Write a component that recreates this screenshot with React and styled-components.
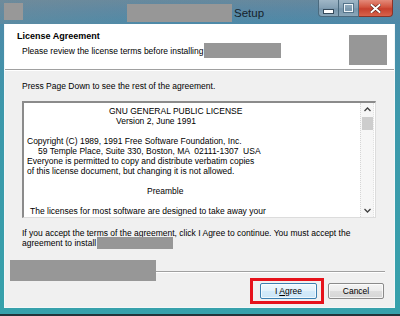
import React from 'react';
import styled, { createGlobalStyle } from 'styled-components';

const Global = createGlobalStyle`
  html, body { margin: 0; padding: 0; background: #1e2c32; }
  body { font-family: "Liberation Sans", Arial, sans-serif; }
  #root { width: 400px; height: 316px; }
`;

const Window = styled.div`
  width: 400px;
  height: 316px;
  display: flex;
  flex-direction: column;
  overflow: hidden;
  background: linear-gradient(180deg, #6a8a9d 0px, #5d89a3 10px, #4d8ba9 24px, #3c98ab 110px, #36a1ab 316px);
`;

const TitleBar = styled.div`
  height: 24px;
  flex-shrink: 0;
  display: flex;
  align-items: flex-start;
  background: linear-gradient(90deg, rgba(120,140,150,0.35) 0%, rgba(80,130,160,0.1) 40%, rgba(70,125,165,0.15) 100%);
`;

const AppIcon = styled.div`
  width: 19px;
  height: 17px;
  margin: 3px 0 0 4px;
  background: #989898;
`;

const TitleGroup = styled.div`
  display: flex;
  align-items: center;
  height: 18px;
  margin: 4px 0 0 104px;
`;

const Redacted = styled.div`
  width: ${p => p.$w}px;
  height: ${p => p.$h}px;
  background: #979797;
  flex-shrink: 0;
`;

const TitleText = styled.span`
  font-size: 11.5px;
  color: #15232c;
  margin-left: 2px;
  line-height: 18px;
`;

const Captions = styled.div`
  display: flex;
  margin: 0 7px 0 auto;
`;

const CapButton = styled.div`
  width: ${p => p.$w}px;
  height: 17px;
  box-sizing: border-box;
  display: flex;
  align-items: center;
  justify-content: center;
  border: 1px solid #4b6a7e;
  border-top: none;
  border-left-width: ${p => (p.$first ? 1 : 0)}px;
  border-radius: ${p => p.$radius};
  background: ${p =>
    p.$close
      ? 'linear-gradient(180deg, #e48a7a 0%, #d2543f 45%, #c7402d 55%, #d8634c 100%)'
      : 'linear-gradient(180deg, #9fb6c6 0%, #84a0b4 50%, #7795ab 55%, #8ba7ba 100%)'};
  border-color: ${p => (p.$close ? '#8a3428' : '#4b6a7e')};
`;

const MinGlyph = styled.div`
  width: 9px;
  height: 3px;
  margin-top: 6px;
  background: #fff;
  border: 1px solid #34495a;
`;

const RestoreGlyph = styled.div`
  width: 7px;
  height: 6px;
  border: 1px solid #eef4f8;
  box-shadow: 0 0 0 1px #55748a;
`;

const Client = styled.div`
  flex: 1;
  margin: 0 5px 0 4px;
  border: 1px solid #f2f7f8;
  border-top: none;
  background: #f0f0f0;
  display: flex;
  flex-direction: column;
  font-size: 8.5px;
  line-height: 10px;
  color: #000;
`;

const Header = styled.div`
  height: 45px;
  flex-shrink: 0;
  background: #fff;
  border-bottom: 1px solid #a0a0a0;
  display: flex;
`;

const HeaderText = styled.div`
  flex: 1;
  padding: 7px 0 0 12px;
`;

const HeaderTitle = styled.div`
  font-weight: bold;
  font-size: 9px;
  line-height: 10px;
`;

const HeaderSub = styled.div`
  display: flex;
  align-items: center;
  height: 15px;
  margin: 2px 0 0 5px;
  white-space: nowrap;
`;

const HeaderLogo = styled(Redacted)`
  margin: 11px 7px 0 0;
`;

const Body = styled.div`
  flex: 1;
  border-top: 1px solid #fff;
  padding-top: 10px;
  display: flex;
  flex-direction: column;
`;

const Intro = styled.div`
  margin-left: 17px;
  white-space: nowrap;
`;

const LicenseBox = styled.div`
  height: 117px;
  margin: 10px 18px 0 17px;
  box-sizing: border-box;
  border-top: 2px solid #8b8b8b;
  border-left: 2px solid #8b8b8b;
  border-right: 1px solid #dcdcdc;
  border-bottom: 1px solid #dcdcdc;
  background: #fff;
  display: flex;
`;

const LicenseText = styled.div`
  flex: 1;
  overflow: hidden;
  padding: 3px 0 0 3px;
`;

const Line = styled.div`
  height: 10px;
  white-space: pre;
  padding-left: ${p => p.$indent || 0}px;
`;

const ScrollBar = styled.div`
  width: 12px;
  margin-right: 1px;
  background: #f6f6f6;
  border-left: 1px dotted #d6d6d6;
  border-right: 1px dotted #e2e2e2;
  display: flex;
  flex-direction: column;
  align-items: center;
`;

const ScrollArrow = styled.div`
  height: 13px;
  width: 100%;
  display: flex;
  align-items: center;
  justify-content: center;
`;

const Thumb = styled.div`
  width: 11px;
  height: 13px;
  margin-top: 1px;
  background: #cdcdcd;
`;

const Spacer = styled.div`
  flex: 1;
`;

const AcceptText = styled.div`
  margin: 10px 0 0 17px;
  white-space: nowrap;
`;

const InlineRedacted = styled.span`
  display: inline-block;
  width: 76px;
  height: 12px;
  margin: -1px 0 -1px 1px;
  vertical-align: top;
  background: #979797;
`;

const BrandRow = styled.div`
  height: 21px;
  margin: 12px 9px 0 5px;
  display: flex;
  align-items: center;
`;

const Etch = styled.div`
  flex: 1;
  height: 0;
  margin-top: 2px;
  border-top: 1px solid #a0a0a0;
  border-bottom: 1px solid #fff;
`;

const ButtonRow = styled.div`
  display: flex;
  justify-content: flex-end;
  gap: 11px;
  margin: 2px 10px 0 0;
`;

const Button = styled.div`
  position: relative;
  width: ${p => p.$w}px;
  height: 16px;
  box-sizing: border-box;
  display: flex;
  align-items: center;
  justify-content: center;
  border-radius: 2px;
  border: 1px solid ${p => (p.$default ? '#3c7fb1' : '#8a8a8a')};
  background: ${p =>
    p.$default
      ? 'linear-gradient(180deg, #f0f8fd 0%, #e2f1fb 50%, #d3eafa 51%, #cde6f7 100%)'
      : 'linear-gradient(180deg, #f4f4f4 0%, #ebebeb 50%, #dddddd 51%, #d6d6d6 100%)'};
  box-shadow: inset 0 0 0 1px rgba(255,255,255,0.7);
  font-size: 8.5px;
  color: #000;

  &::after {
    content: '';
    display: ${p => (p.$marked ? 'block' : 'none')};
    position: absolute;
    left: -11px;
    right: -8px;
    top: -6px;
    bottom: -6px;
    border: 3px solid #e6121b;
  }
`;

const BottomFrame = styled.div`
  height: 8px;
  flex-shrink: 0;
  box-sizing: border-box;
  border-bottom: 2px solid #22343a;
`;

const Chevron = ({ down }) => (
  <svg width="7" height="5" viewBox="0 0 7 5">
    <path
      d={down ? 'M0.5 1 L3.5 4 L6.5 1' : 'M0.5 4 L3.5 1 L6.5 4'}
      fill="none"
      stroke="#404040"
      strokeWidth="1.3"
    />
  </svg>
);

const CloseGlyph = () => (
  <svg width="11" height="9" viewBox="0 0 11 9">
    <path d="M1.5 1 L9.5 8 M9.5 1 L1.5 8" stroke="#5a1d16" strokeWidth="3.2" strokeLinecap="square" />
    <path d="M1.5 1 L9.5 8 M9.5 1 L1.5 8" stroke="#fff" strokeWidth="2" strokeLinecap="square" />
  </svg>
);

const licenseLines = [
  { t: 'GNU GENERAL PUBLIC LICENSE', i: 82 },
  { t: 'Version 2, June 1991', i: 89 },
  { t: '' },
  { t: 'Copyright (C) 1989, 1991 Free Software Foundation, Inc.' },
  { t: '59 Temple Place, Suite 330, Boston, MA  02111-1307  USA', i: 11 },
  { t: 'Everyone is permitted to copy and distribute verbatim copies' },
  { t: 'of this license document, but changing it is not allowed.' },
  { t: '' },
  { t: 'Preamble', i: 120 },
  { t: '' },
  { t: 'The licenses for most software are designed to take away your', i: 3 },
  { t: 'freedom to share and change it.  By contrast, the GNU General Public' },
];

export default function App() {
  return (
    <>
      <Global />
      <Window>
        <TitleBar>
          <AppIcon />
          <TitleGroup>
            <Redacted $w={105} $h={18} />
            <TitleText>Setup</TitleText>
          </TitleGroup>
          <Captions>
            <CapButton $w={21} $first $radius="0 0 0 4px">
              <MinGlyph />
            </CapButton>
            <CapButton $w={20} $radius="0">
              <RestoreGlyph />
            </CapButton>
            <CapButton $w={34} $close $radius="0 0 4px 0">
              <CloseGlyph />
            </CapButton>
          </Captions>
        </TitleBar>
        <Client>
          <Header>
            <HeaderText>
              <HeaderTitle>License Agreement</HeaderTitle>
              <HeaderSub>
                Please review the license terms before installing
                <Redacted $w={77} $h={15} style={{ marginLeft: 1 }} />
              </HeaderSub>
            </HeaderText>
            <HeaderLogo $w={38} $h={30} />
          </Header>
          <Body>
            <Intro>Press Page Down to see the rest of the agreement.</Intro>
            <LicenseBox>
              <LicenseText>
                {licenseLines.map((l, k) => (
                  <Line key={k} $indent={l.i}>{l.t}</Line>
                ))}
              </LicenseText>
              <ScrollBar>
                <ScrollArrow><Chevron /></ScrollArrow>
                <Thumb />
                <Spacer />
                <ScrollArrow><Chevron down /></ScrollArrow>
              </ScrollBar>
            </LicenseBox>
            <AcceptText>
              If you accept the terms of the agreement, click I Agree to continue. You must accept the
              <br />
              agreement to install
              <InlineRedacted />
            </AcceptText>
            <BrandRow>
              <Redacted $w={146} $h={21} />
              <Etch />
            </BrandRow>
            <ButtonRow>
              <Button $w={57} $default $marked>
                <span>I <u>A</u>gree</span>
              </Button>
              <Button $w={56}>Cancel</Button>
            </ButtonRow>
          </Body>
        </Client>
        <BottomFrame />
      </Window>
    </>
  );
}
